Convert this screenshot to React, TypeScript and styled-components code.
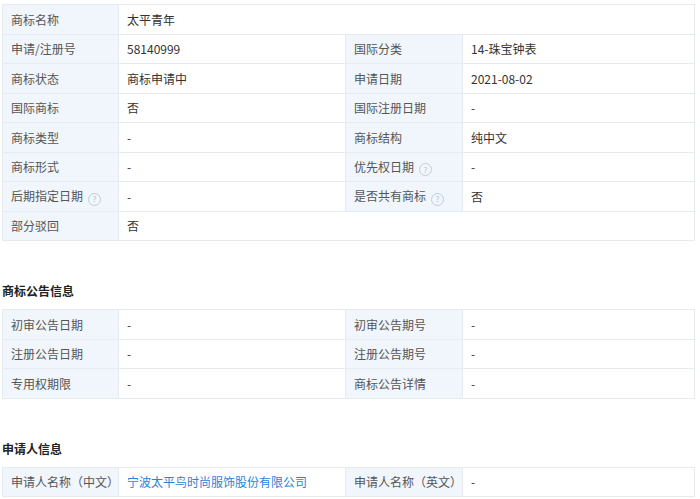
import styled, { createGlobalStyle } from 'styled-components'

const Global = createGlobalStyle`
  body {
    margin: 0;
    background: #fff;
    font-family: "Noto Sans CJK SC", "Liberation Sans", sans-serif;
    font-size: 12px;
    color: #333;
  }
`

const Page = styled.div`
  padding: 4px 6px 0 2px;
`

const Table = styled.table`
  width: 692px;
  border-collapse: collapse;
  table-layout: fixed;
  border: 1px solid #e6ebf0;
`

const Row = styled.tr`
  height: 29.5px;
`

const Label = styled.td`
  background: #f0f6fc;
  color: #555;
  padding: 0 8px;
  border: 1px solid #e6ebf0;
  white-space: nowrap;
`

const Value = styled.td<{ $link?: boolean }>`
  padding: 0 8px;
  border: 1px solid #e6ebf0;
  color: ${({ $link }) => ($link ? '#2e7fd8' : '#333')};
  white-space: nowrap;
`

const Heading = styled.h3`
  margin: 0;
  font-size: 12px;
  font-weight: bold;
  color: #222;
  padding: ${({ $top }: { $top: number }) => `${$top}px 0 10px 0`};
`

const Help = styled.span`
  display: inline-flex;
  align-items: center;
  justify-content: center;
  width: 11px;
  height: 11px;
  margin-left: 5px;
  border: 1px solid #c4cdd6;
  border-radius: 50%;
  color: #b8c2cc;
  font-size: 8px;
  line-height: 1;
  vertical-align: -1px;
`

const Cols = () => (
  <colgroup>
    <col style={{ width: 116 }} />
    <col style={{ width: 227 }} />
    <col style={{ width: 117 }} />
    <col style={{ width: 232 }} />
  </colgroup>
)

const Q = () => <Help>?</Help>

export default function App() {
  return (
    <Page>
      <Global />
      <Table>
        <Cols />
        <tbody>
          <Row><Label>商标名称</Label><Value colSpan={3}>太平青年</Value></Row>
          <Row><Label>申请/注册号</Label><Value>58140999</Value><Label>国际分类</Label><Value>14-珠宝钟表</Value></Row>
          <Row><Label>商标状态</Label><Value>商标申请中</Value><Label>申请日期</Label><Value>2021-08-02</Value></Row>
          <Row><Label>国际商标</Label><Value>否</Value><Label>国际注册日期</Label><Value>-</Value></Row>
          <Row><Label>商标类型</Label><Value>-</Value><Label>商标结构</Label><Value>纯中文</Value></Row>
          <Row><Label>商标形式</Label><Value>-</Value><Label>优先权日期<Q /></Label><Value>-</Value></Row>
          <Row><Label>后期指定日期<Q /></Label><Value>-</Value><Label>是否共有商标<Q /></Label><Value>否</Value></Row>
          <Row><Label>部分驳回</Label><Value colSpan={3}>否</Value></Row>
        </tbody>
      </Table>
      <Heading $top={41}>商标公告信息</Heading>
      <Table>
        <Cols />
        <tbody>
          <Row><Label>初审公告日期</Label><Value>-</Value><Label>初审公告期号</Label><Value>-</Value></Row>
          <Row><Label>注册公告日期</Label><Value>-</Value><Label>注册公告期号</Label><Value>-</Value></Row>
          <Row><Label>专用权期限</Label><Value>-</Value><Label>商标公告详情</Label><Value>-</Value></Row>
        </tbody>
      </Table>
      <Heading $top={41}>申请人信息</Heading>
      <Table>
        <Cols />
        <tbody>
          <Row><Label>申请人名称（中文）</Label><Value $link>宁波太平鸟时尚服饰股份有限公司</Value><Label>申请人名称（英文）</Label><Value>-</Value></Row>
        </tbody>
      </Table>
    </Page>
  )
}
